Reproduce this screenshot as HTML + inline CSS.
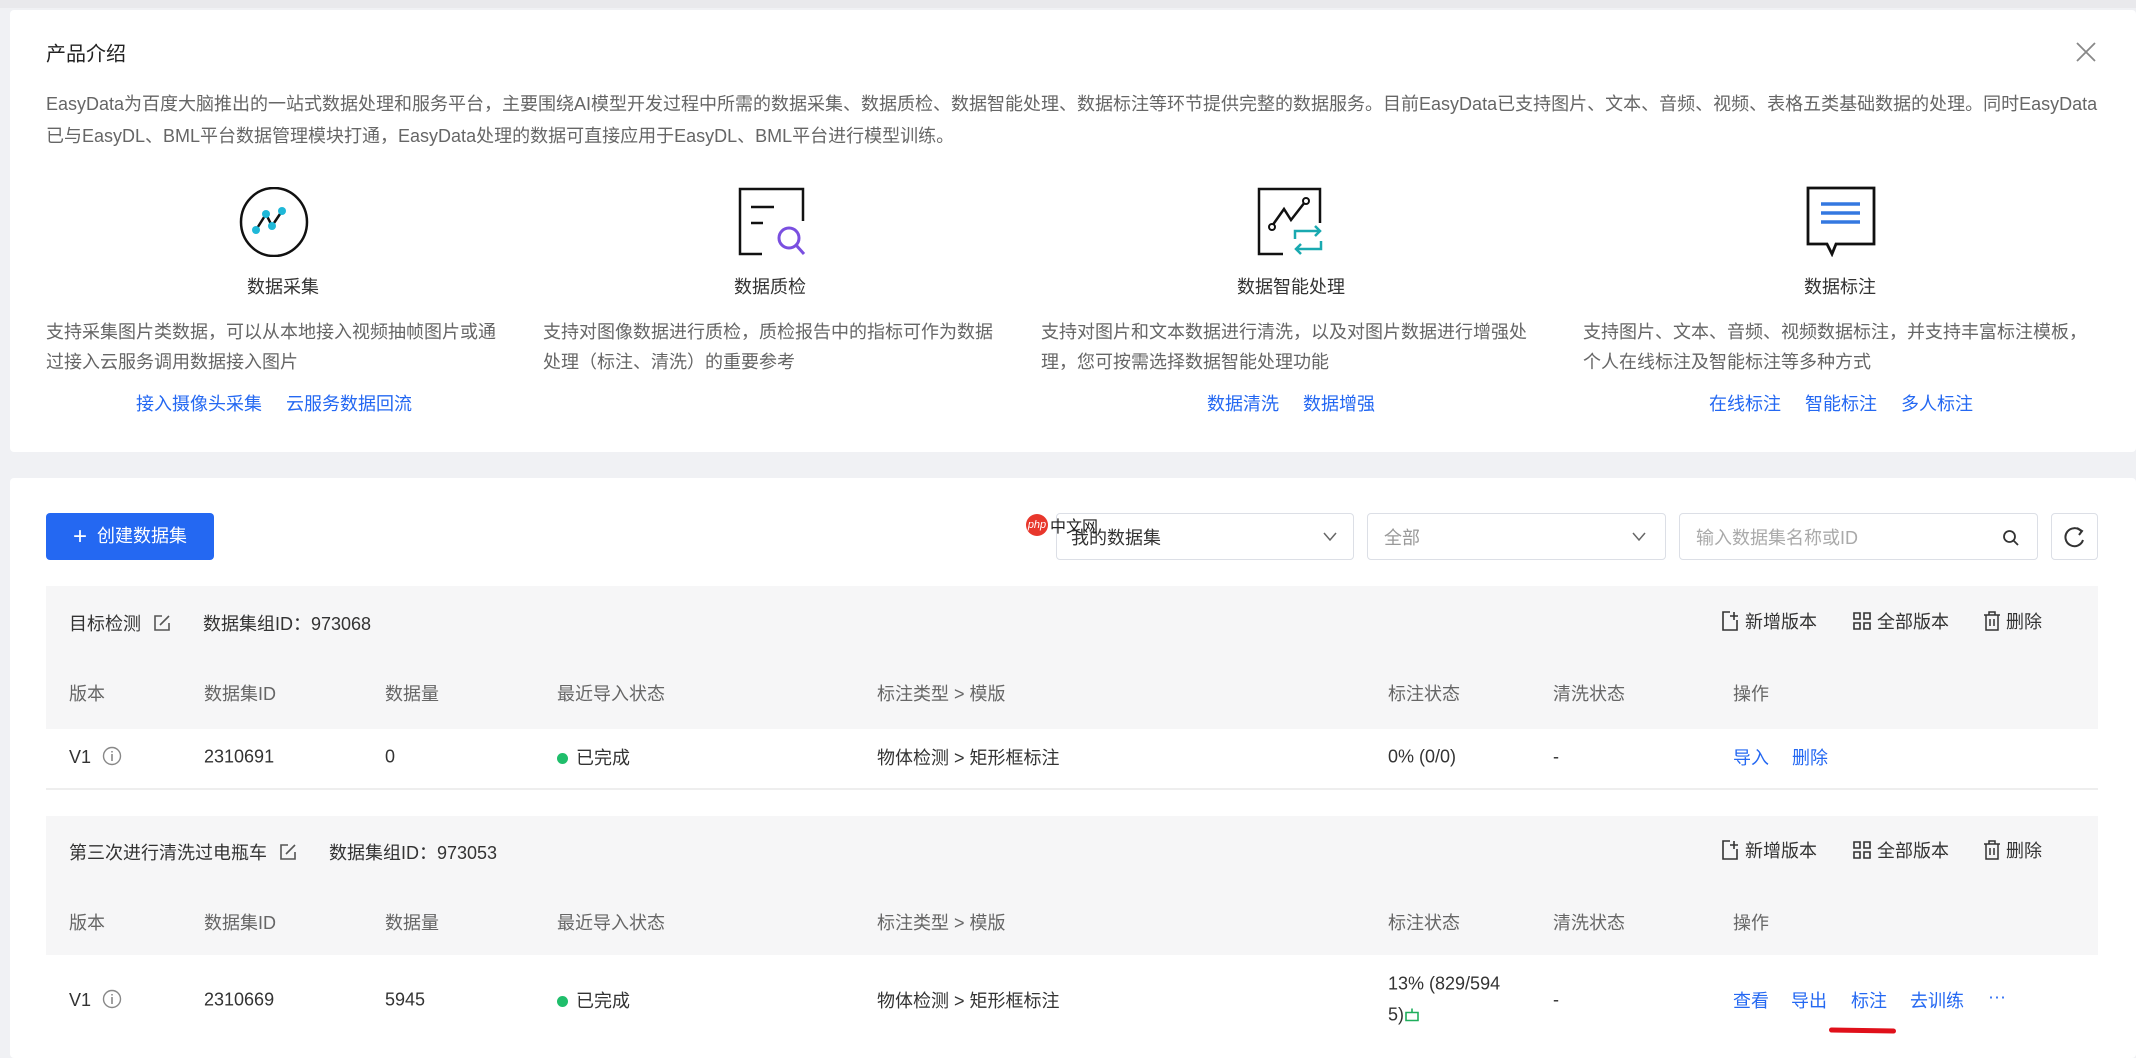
<!DOCTYPE html>
<html><head><meta charset="utf-8"><style>
*{margin:0;padding:0;box-sizing:border-box}
body{width:2136px;height:1048px;background:#f0f1f4;font-family:"Liberation Sans","Noto Sans CJK SC",sans-serif;position:relative;overflow:hidden;color:#333;font-size:18px}
.a{position:absolute;white-space:nowrap}
.card{position:absolute;background:#fff;border-radius:4px}
.gray{color:#666}
.lk{color:#2468f2}
.t{position:absolute;white-space:nowrap;transform:translateY(-50%)}
.c{transform:translate(-50%,-50%)}
.gbox{position:absolute;left:46px;width:2052px;background:#f6f6f7}
.sel{position:absolute;top:513px;height:47px;border:1px solid #dcdfe6;border-radius:4px;background:#fff}
</style></head><body>
<div class="a" style="left:0;top:0;width:2136px;height:8px;background:#e9e9ec"></div>
<div class="card" style="left:10px;top:10px;width:2126px;height:442px"></div>
<div class="t" style="left:46px;top:52px;font-size:20px;color:#222">产品介绍</div>
<svg class="a" style="left:2076px;top:42px" width="20" height="20"><path d="M1 1L19 19M19 1L1 19" stroke="#888" stroke-width="1.8"/></svg>
<div class="t gray" style="left:46px;top:103px;font-size:18px">EasyData为百度大脑推出的一站式数据处理和服务平台，主要围绕AI模型开发过程中所需的数据采集、数据质检、数据智能处理、数据标注等环节提供完整的数据服务。目前EasyData已支持图片、文本、音频、视频、表格五类基础数据的处理。同时EasyData</div>
<div class="t gray" style="left:46px;top:135px;font-size:18px">已与EasyDL、BML平台数据管理模块打通，EasyData处理的数据可直接应用于EasyDL、BML平台进行模型训练。</div>

<!-- icons -->
<svg class="a" style="left:239px;top:187px" width="70" height="70"><ellipse cx="35" cy="35" rx="33" ry="34" fill="none" stroke="#111" stroke-width="2.5"/><path d="M17 43L27 27L33 39L43 24" fill="none" stroke="#111" stroke-width="2.5"/><circle cx="17" cy="43" r="4" fill="#1fb8d8"/><circle cx="27" cy="27" r="4" fill="#1fb8d8"/><circle cx="33" cy="39" r="4" fill="#1fb8d8"/><circle cx="43" cy="24" r="4" fill="#1fb8d8"/></svg>
<svg class="a" style="left:738px;top:187px" width="70" height="70"><path d="M24 67H2V2H65V34" fill="none" stroke="#111" stroke-width="2.5"/><path d="M13 20H36M13 36H25" stroke="#111" stroke-width="2.5"/><circle cx="51" cy="51" r="10" fill="none" stroke="#7a4fe0" stroke-width="3"/><path d="M58 58L66 67" stroke="#7a4fe0" stroke-width="3"/></svg>
<svg class="a" style="left:1257px;top:187px" width="70" height="70"><path d="M26 67H2V2H63V36" fill="none" stroke="#111" stroke-width="2.5"/><path d="M15 39L27 22L34 33L48 15" fill="none" stroke="#111" stroke-width="2.5"/><circle cx="15" cy="40" r="3" fill="#fff" stroke="#111" stroke-width="2"/><circle cx="49" cy="14" r="3" fill="#fff" stroke="#111" stroke-width="2"/><path d="M38 52V44H63M58 39L63 44L58 49M64 54V62H39M44 57L39 62L44 67" fill="none" stroke="#19a9b0" stroke-width="2.5"/></svg>
<svg class="a" style="left:1805px;top:185px" width="72" height="72"><path d="M3 3H69V59H31L27 69L22 59H3Z" fill="#fff" stroke="#111" stroke-width="2.8"/><path d="M16 19H55M16 28H55M16 37H55" stroke="#3478e0" stroke-width="3.5"/></svg>

<div class="t c" style="left:283px;top:286px">数据采集</div>
<div class="t c" style="left:770px;top:286px">数据质检</div>
<div class="t c" style="left:1291px;top:286px">数据智能处理</div>
<div class="t c" style="left:1840px;top:286px">数据标注</div>

<div class="t gray" style="left:46px;top:331px">支持采集图片类数据，可以从本地接入视频抽帧图片或通</div>
<div class="t gray" style="left:46px;top:361px">过接入云服务调用数据接入图片</div>
<div class="t gray" style="left:543px;top:331px">支持对图像数据进行质检，质检报告中的指标可作为数据</div>
<div class="t gray" style="left:543px;top:361px">处理（标注、清洗）的重要参考</div>
<div class="t gray" style="left:1041px;top:331px">支持对图片和文本数据进行清洗，以及对图片数据进行增强处</div>
<div class="t gray" style="left:1041px;top:361px">理，您可按需选择数据智能处理功能</div>
<div class="t gray" style="left:1583px;top:331px">支持图片、文本、音频、视频数据标注，并支持丰富标注模板，</div>
<div class="t gray" style="left:1583px;top:361px">个人在线标注及智能标注等多种方式</div>

<div class="t lk" style="left:136px;top:403px">接入摄像头采集</div>
<div class="t lk" style="left:286px;top:403px">云服务数据回流</div>
<div class="t lk" style="left:1207px;top:403px">数据清洗</div>
<div class="t lk" style="left:1303px;top:403px">数据增强</div>
<div class="t lk" style="left:1709px;top:403px">在线标注</div>
<div class="t lk" style="left:1805px;top:403px">智能标注</div>
<div class="t lk" style="left:1901px;top:403px">多人标注</div>

<div class="card" style="left:10px;top:478px;width:2126px;height:580px"></div>
<div class="a" style="left:46px;top:513px;width:168px;height:47px;background:#2468f2;border-radius:4px;color:#fff;line-height:47px;text-align:center;font-size:18px"><span style="font-size:24px;vertical-align:-2px">+</span>&nbsp; 创建数据集</div>
<div class="sel" style="left:1056px;width:298px"><span class="t" style="left:14px;top:23px">我的数据集</span><svg class="a" style="left:266px;top:18px" width="14" height="10"><path d="M1 1L7 8L13 1" fill="none" stroke="#666" stroke-width="1.5"/></svg></div>
<div class="a" style="left:1026px;top:514px;width:22px;height:22px;border-radius:50%;background:#e8372c;color:#fff;font-size:11px;line-height:22px;text-align:center;font-style:italic">php</div>
<div class="a" style="left:1050px;top:513px;font-size:16px;color:#222">中文网</div>
<div class="sel" style="left:1367px;width:299px"><span class="t" style="left:16px;top:23px;color:#999">全部</span><svg class="a" style="left:264px;top:18px" width="14" height="10"><path d="M1 1L7 8L13 1" fill="none" stroke="#666" stroke-width="1.5"/></svg></div>
<div class="sel" style="left:1679px;width:359px"><span class="t" style="left:16px;top:23px;color:#aaa">输入数据集名称或ID</span><svg class="a" style="left:322px;top:15px" width="18" height="18"><circle cx="7.5" cy="7.5" r="5.5" fill="none" stroke="#333" stroke-width="1.8"/><path d="M11.5 11.5L16 16" stroke="#333" stroke-width="1.8"/></svg></div>
<div class="sel" style="left:2051px;width:47px"><svg class="a" style="left:12px;top:12px" width="22" height="22"><path d="M17 5A9 9 0 1 0 19 14" fill="none" stroke="#333" stroke-width="2"/><path d="M13 2L18 5L15 9" fill="none" stroke="#333" stroke-width="2"/></svg></div>

<!-- group 1 -->
<div class="gbox" style="top:586px;height:143px"></div>
<div class="t" style="left:69px;top:623px">目标检测</div>
<svg class="a" style="left:153px;top:614px" width="18" height="18"><path d="M9 2H2V16H16V9" fill="none" stroke="#555" stroke-width="1.6"/><path d="M7 11L16 2" stroke="#555" stroke-width="1.6"/></svg>
<div class="t" style="left:203px;top:623px">数据集组ID：973068</div>
<div class="t c" style="left:1720px;top:621px;transform:translateY(-50%)"><svg width="20" height="22" style="vertical-align:-4px"><path d="M10 2H3V20H17V10M14 2V10M10 6H18" fill="none" stroke="#333" stroke-width="1.6"/></svg> 新增版本</div>
<div class="t" style="left:1852px;top:621px"><svg width="20" height="20" style="vertical-align:-3px"><path d="M2 2H8V8H2ZM12 2H18V8H12ZM2 12H8V18H2ZM12 12H18V18H12Z" fill="none" stroke="#333" stroke-width="1.6"/></svg> 全部版本</div>
<div class="t" style="left:1983px;top:621px"><svg width="18" height="20" style="vertical-align:-3px"><path d="M1 4H17M6 4V1H12V4M3 4V19H15V4M7 8V15M11 8V15" fill="none" stroke="#333" stroke-width="1.5"/></svg> 删除</div>
<div class="t gray" style="left:69px;top:693px">版本</div><div class="t gray" style="left:204px;top:693px">数据集ID</div><div class="t gray" style="left:385px;top:693px">数据量</div><div class="t gray" style="left:557px;top:693px">最近导入状态</div><div class="t gray" style="left:877px;top:693px">标注类型 &gt; 模版</div><div class="t gray" style="left:1388px;top:693px">标注状态</div><div class="t gray" style="left:1553px;top:693px">清洗状态</div><div class="t gray" style="left:1733px;top:693px">操作</div>
<div class="t" style="left:69px;top:757px">V1 <svg width="20" height="20" style="vertical-align:-3px;margin-left:6px"><circle cx="10" cy="10" r="8.5" fill="none" stroke="#888" stroke-width="1.4"/><path d="M10 8V15M10 5V6.5" stroke="#888" stroke-width="1.6"/></svg></div>
<div class="t" style="left:204px;top:757px">2310691</div><div class="t" style="left:385px;top:757px">0</div>
<div class="t" style="left:557px;top:757px"><span style="display:inline-block;width:11px;height:11px;border-radius:50%;background:#1fbe6b;margin-right:8px"></span>已完成</div>
<div class="t" style="left:877px;top:757px">物体检测 &gt; 矩形框标注</div><div class="t" style="left:1388px;top:757px">0% (0/0)</div><div class="t" style="left:1553px;top:757px">-</div>
<div class="t lk" style="left:1733px;top:757px">导入</div><div class="t lk" style="left:1792px;top:757px">删除</div>
<div class="a" style="left:46px;top:788px;width:2052px;height:2px;background:#eee"></div>

<!-- group 2 -->
<div class="gbox" style="top:816px;height:139px"></div>
<div class="t" style="left:69px;top:852px">第三次进行清洗过电瓶车</div>
<svg class="a" style="left:279px;top:843px" width="18" height="18"><path d="M9 2H2V16H16V9" fill="none" stroke="#555" stroke-width="1.6"/><path d="M7 11L16 2" stroke="#555" stroke-width="1.6"/></svg>
<div class="t" style="left:329px;top:852px">数据集组ID：973053</div>
<div class="t" style="left:1720px;top:850px"><svg width="20" height="22" style="vertical-align:-4px"><path d="M10 2H3V20H17V10M14 2V10M10 6H18" fill="none" stroke="#333" stroke-width="1.6"/></svg> 新增版本</div>
<div class="t" style="left:1852px;top:850px"><svg width="20" height="20" style="vertical-align:-3px"><path d="M2 2H8V8H2ZM12 2H18V8H12ZM2 12H8V18H2ZM12 12H18V18H12Z" fill="none" stroke="#333" stroke-width="1.6"/></svg> 全部版本</div>
<div class="t" style="left:1983px;top:850px"><svg width="18" height="20" style="vertical-align:-3px"><path d="M1 4H17M6 4V1H12V4M3 4V19H15V4M7 8V15M11 8V15" fill="none" stroke="#333" stroke-width="1.5"/></svg> 删除</div>
<div class="t gray" style="left:69px;top:922px">版本</div><div class="t gray" style="left:204px;top:922px">数据集ID</div><div class="t gray" style="left:385px;top:922px">数据量</div><div class="t gray" style="left:557px;top:922px">最近导入状态</div><div class="t gray" style="left:877px;top:922px">标注类型 &gt; 模版</div><div class="t gray" style="left:1388px;top:922px">标注状态</div><div class="t gray" style="left:1553px;top:922px">清洗状态</div><div class="t gray" style="left:1733px;top:922px">操作</div>
<div class="t" style="left:69px;top:1000px">V1 <svg width="20" height="20" style="vertical-align:-3px;margin-left:6px"><circle cx="10" cy="10" r="8.5" fill="none" stroke="#888" stroke-width="1.4"/><path d="M10 8V15M10 5V6.5" stroke="#888" stroke-width="1.6"/></svg></div>
<div class="t" style="left:204px;top:1000px">2310669</div><div class="t" style="left:385px;top:1000px">5945</div>
<div class="t" style="left:557px;top:1000px"><span style="display:inline-block;width:11px;height:11px;border-radius:50%;background:#1fbe6b;margin-right:8px"></span>已完成</div>
<div class="t" style="left:877px;top:1000px">物体检测 &gt; 矩形框标注</div>
<div class="t" style="left:1388px;top:984px">13% (829/594</div>
<div class="t" style="left:1388px;top:1015px">5)<svg width="16" height="14" style="vertical-align:-1px"><path d="M2 5H14V13H2Z M8 5V1" fill="none" stroke="#1fae5c" stroke-width="1.6"/></svg></div>
<div class="t" style="left:1553px;top:1000px">-</div>
<div class="t lk" style="left:1733px;top:1000px">查看</div><div class="t lk" style="left:1791px;top:1000px">导出</div><div class="t lk" style="left:1851px;top:1000px">标注</div><div class="t lk" style="left:1910px;top:1000px">去训练</div><div class="t lk" style="left:1988px;top:997px">···</div>
<div class="a" style="left:1829px;top:1028px;width:67px;height:5px;background:#e0101a;border-radius:3px;transform:rotate(1deg)"></div>
</body></html>
